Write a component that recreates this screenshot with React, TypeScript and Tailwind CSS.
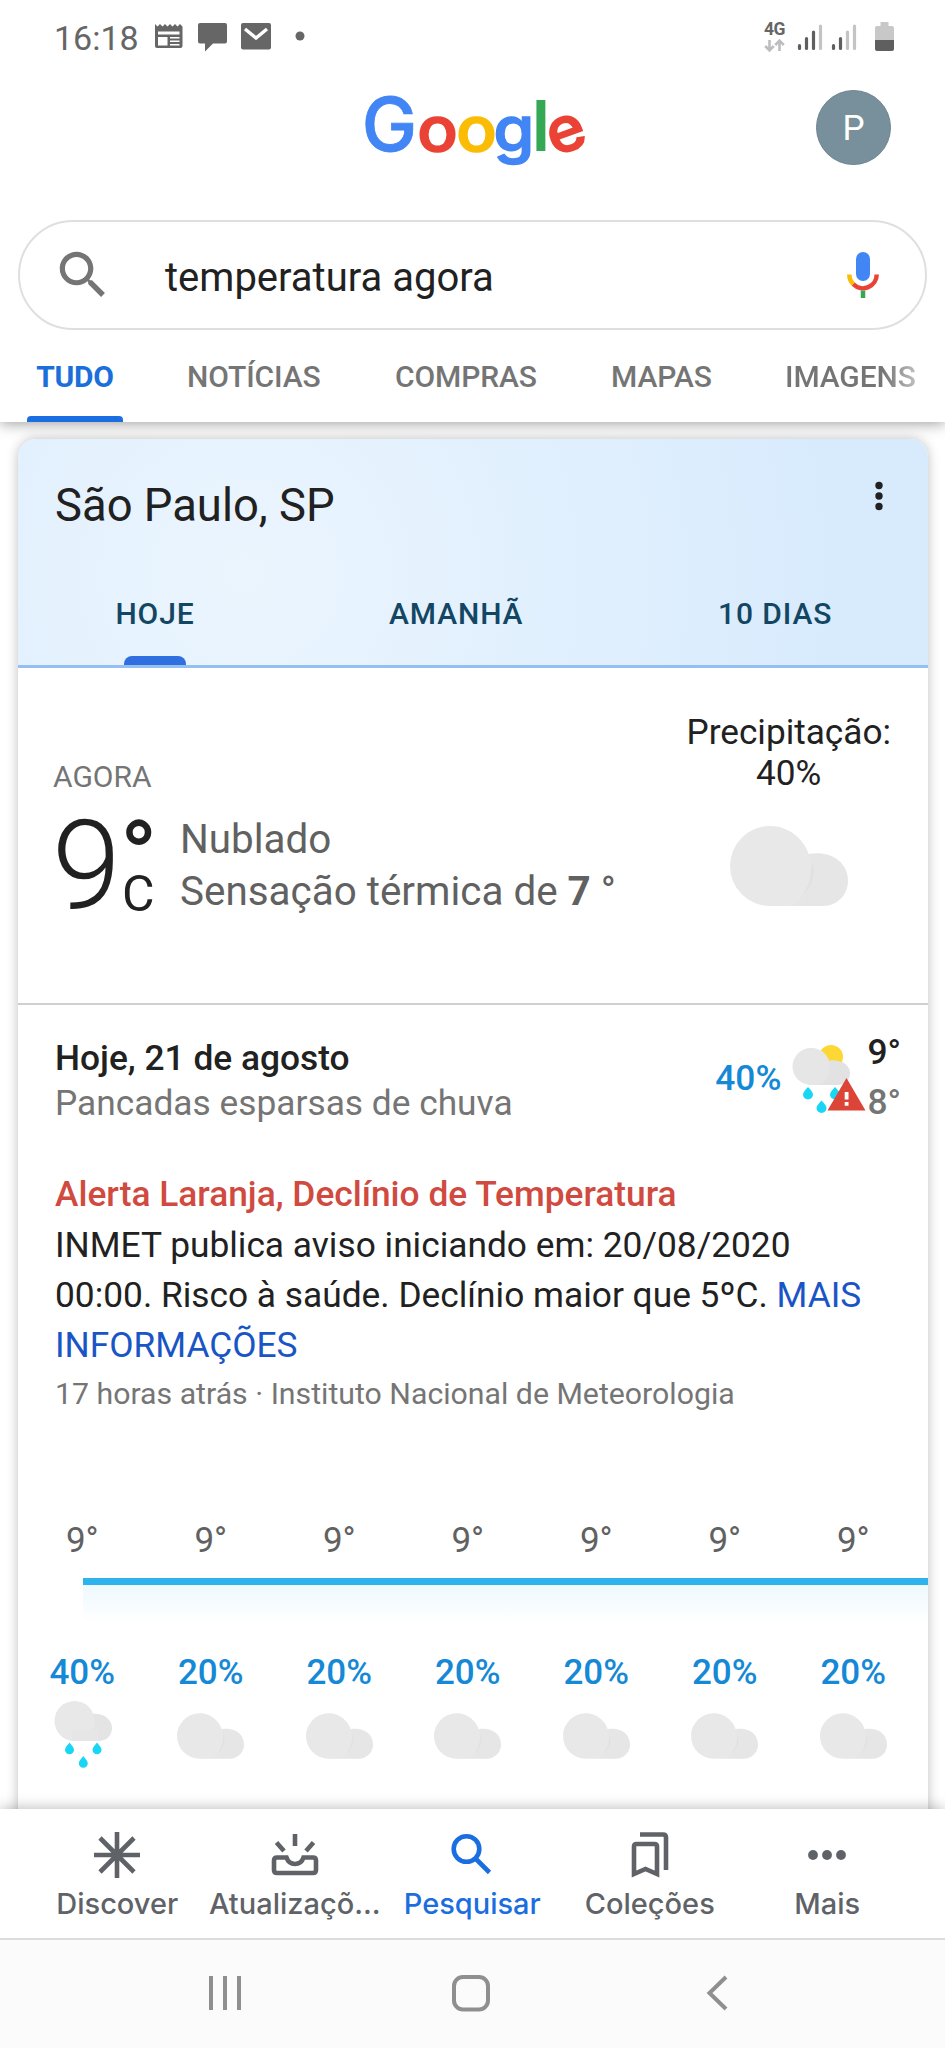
import React from "react";

const HOURS = [
  { temp: "9°", rain: "40%", kind: "rain" },
  { temp: "9°", rain: "20%", kind: "cloud" },
  { temp: "9°", rain: "20%", kind: "cloud" },
  { temp: "9°", rain: "20%", kind: "cloud" },
  { temp: "9°", rain: "20%", kind: "cloud" },
  { temp: "9°", rain: "20%", kind: "cloud" },
  { temp: "9°", rain: "20%", kind: "cloud" },
];

function StatusBar() {
  return (
    <div className="flex h-[75px] shrink-0 items-start justify-between pr-[50px] pl-[54px] text-[#666]">
      <div className="flex items-start">
        <span className="w-[98px] pt-[18px] text-[34px] leading-[40px]">16:18</span>
        <svg className="mt-[20px]" width="156" height="34" viewBox="152 20 156 34" fill="#666">
          <path d="M155 24l2.500 2.500 2.500-2.500 2.500 2.500 2.500-2.500 2.500 2.500 2.500-2.500 2.500 2.500 2.500-2.500 2.500 2.500 2.500-2.500 2.500 2.500V46a2 2 0 0 1-2 2H157a2 2 0 0 1-2-2z" />
          <path d="M158 31.500h21.500v3H158zM158 37h9.500v8.500H158zM170 37h9.500v1.500H170zM170 40.500h9.500v1.500H170zM170 44h9.500v1.500H170z" fill="#fff" />
          <path d="M200 23h25a2 2 0 0 1 2 2v16.500a2 2 0 0 1-2 2H213l-8 8v-8h-5a2 2 0 0 1-2-2V25a2 2 0 0 1 2-2z" />
          <rect x="241" y="23" width="30" height="26.500" rx="2" />
          <path d="M245 29l11 9 11-9" fill="none" stroke="#fff" strokeWidth="3.400" />
          <circle cx="300" cy="36" r="4.500" />
        </svg>
      </div>
      <div className="flex">
        <div className="flex w-[33px] flex-col pt-[19px]">
          <span className="text-[17.5px] leading-[20px] font-bold tracking-[-0.5px]">4G</span>
          <svg width="22" height="14" viewBox="0 0 22 14" fill="none" stroke="#bdbdbd" strokeWidth="2.600">
            <path d="M5.500 1v10M1.200 7l4.300 4.300L9.800 7M15.500 12V2M11.200 6l4.300-4.300L19.800 6" />
          </svg>
        </div>
        <svg className="mt-[20px]" width="98" height="34" viewBox="796 20 98 34" strokeWidth="3.200" strokeLinecap="round">
          <path d="M798.500 45.500v3M805.500 38.500v10M812.500 32v16.500M832.500 45.500v3M839.500 38.500v10" stroke="#5f5f5f" />
          <path d="M819.500 26v22.500M846.500 32v16.500M853.500 26v22.500" stroke="#c4c4c4" />
          <path d="M879.500 22h8v4h3.500a2 2 0 0 1 2 2v12h-19V28a2 2 0 0 1 2-2h3.500z" fill="#c8c8c8" />
          <path d="M874 40h19v9a2 2 0 0 1-2 2h-15a2 2 0 0 1-2-2z" fill="#5f5f5f" />
        </svg>
      </div>
    </div>
  );
}

function Logo() {
  return (
    <svg className="shrink-0" width="269" height="130" viewBox="341 70 269 130" fontFamily="Inter, sans-serif" fontWeight="500" textAnchor="middle">
      <text x="392.500" y="151" fontSize="74" fill="#4285f4" stroke="#4285f4" strokeWidth="0.8">G</text>
      <g fontSize="61" strokeWidth="1.6">
        <text transform="translate(440.500 151) scale(1.1 1.02)" fill="#ea4335" stroke="#ea4335">o</text>
        <text transform="translate(479.500 151) scale(1.1 1.02)" fill="#fbbc05" stroke="#fbbc05">o</text>
        <text transform="translate(517 151) scale(1.08 1.02)" fill="#4285f4" stroke="#4285f4">g</text>
        <text transform="rotate(-20 569.500 134.500) translate(569.500 151) scale(1.06 1.02)" fill="#ea4335" stroke="#ea4335">e</text>
      </g>
      <text x="544" y="151" fontSize="70" fontWeight="600" fill="#34a853">l</text>
    </svg>
  );
}

function SearchBar() {
  return (
    <div className="mr-[18px] ml-[18px] flex h-[110px] shrink-0 items-center rounded-full border-[2.5px] border-[#dfdfdf] pl-[32px]">
      <svg width="62" height="62" viewBox="0 0 24 24" fill="#757575">
        <path d="M15.500 14h-.79l-.28-.27C15.410 12.590 16 11.110 16 9.500 16 5.910 13.090 3 9.500 3S3 5.910 3 9.500 5.910 16 9.500 16c1.610 0 3.090-.59 4.230-1.570l.27.28v.79l5 4.990L20.490 19l-4.990-5zm-6 0C7.010 14 5 11.990 5 9.500S7.010 5 9.500 5 14 7.010 14 9.500 11.990 14 9.500 14z" />
      </svg>
      <span className="ml-[51px] flex-1 pt-[5px] text-[40px] leading-[50px] text-[#212121]">temperatura agora</span>
      <svg className="mr-[42px]" width="40" height="50" viewBox="842 250 40 50" fill="none" strokeWidth="4.500">
        <rect x="855" y="252" width="14" height="29" rx="7" fill="#4285f4" />
        <path d="M848.300 274.500a13.700 13.700 0 0 0 4 9.700" stroke="#fbbc05" />
        <path d="M852.300 284.200a13.700 13.700 0 0 0 23.400-9.700" stroke="#ea4335" />
        <path d="M862 290.500v7.500" stroke="#34a853" />
      </svg>
    </div>
  );
}

function SearchTabs() {
  return (
    <div className="flex h-[92px] shrink-0 pl-[27px] text-[30px] leading-[40px] font-medium tracking-[-0.1px] whitespace-nowrap text-[#757575]">
      <div className="flex w-[96px] flex-col items-center justify-between pt-[27px] text-[#1a6fdb]">
        <span className="font-bold tracking-[-0.3px]">TUDO</span>
        <div className="h-[6px] w-full rounded-t-[4px] bg-[#1b6ee0]" />
      </div>
      <span className="ml-[64px] w-[208px] pt-[27px]">NOTÍCIAS</span>
      <span className="w-[216px] pt-[27px]">COMPRAS</span>
      <span className="w-[174px] pt-[27px]">MAPAS</span>
      <span className="bg-gradient-to-r from-[#757575] from-75% to-[#c0c0c0] bg-clip-text pt-[27px] text-transparent">IMAGENS</span>
    </div>
  );
}

function Cloud({ className }: { className?: string }) {
  return (
    <svg className={className} viewBox="0 0 118 80">
      <path d="M78 28c20-4 40 6 40 27 0 14-11 25-25 25H60z" fill="#e6e6e6" />
      <path d="M40 0c22 0 40 18 41 40 0 16-8 40-24 40H40a40 40 0 0 1 0-80z" fill="#e8e8e8" />
      <path d="M81 37c2 12-3 25-9 32 8-3 16-24 9-32z" fill="#e1e1e1" />
    </svg>
  );
}

function RainCloud() {
  return (
    <svg className="h-[72px] w-[60px]" viewBox="52 1698 60 72">
      <path d="M88 1715c12-4 24 3 24 13 0 8-6 13-13 13H80z" fill="#e4e4e4" />
      <circle cx="74.500" cy="1721" r="20" fill="#e8e8e8" />
      <rect x="72" y="1730" width="26" height="11" fill="#e6e6e6" />
      <g fill="#1ad6f5">
        <path d="M69.500 1742.500c2.500 3.500 4.500 5 4.500 7.300a4.500 4.500 0 0 1-9 0c0-2.300 2-3.800 4.500-7.300z" />
        <path d="M97 1742.500c2.500 3.500 4.500 5 4.500 7.300a4.500 4.500 0 0 1-9 0c0-2.300 2-3.800 4.500-7.300z" />
        <path d="M83.300 1756c2.500 3.500 4.500 5 4.500 7.300a4.500 4.500 0 0 1-9 0c0-2.300 2-3.800 4.500-7.300z" />
      </g>
    </svg>
  );
}

function AlertWeather() {
  return (
    <svg width="78" height="72" viewBox="790 1042 78 72">
      <circle cx="831" cy="1056" r="12" fill="#fdd835" />
      <path d="M826 1060c13-3 24 3 24 12 0 7-5 12-12 12h-26z" fill="#e2e2e2" />
      <path d="M811 1047c11 0 19 8 19 19 0 8-5 18-13 18h-6a18.500 18.500 0 0 1 0-37z" fill="#e6e6e6" />
      <g fill="#1ad6f5">
        <path d="M808 1086c3 3.500 5 5.500 5 7.500a5 5 0 0 1-10 0c0-2 2-4 5-7.500z" />
        <path d="M835 1086c3 3.500 5 5.500 5 7.500a5 5 0 0 1-10 0c0-2 2-4 5-7.500z" />
        <path d="M821.500 1099.500c3 3.500 5 5.500 5 7.500a5 5 0 0 1-10 0c0-2 2-4 5-7.500z" />
      </g>
      <path d="M846.500 1077l19 32.500h-38z" fill="#dc4437" />
      <path d="M844.700 1091h3.800v7.500h-3.800zM844.700 1101h3.800v3.800h-3.800z" fill="#fff" />
    </svg>
  );
}

function WeatherHeader() {
  return (
    <div className="flex h-[229px] flex-col rounded-t-[18px] border-b-[3px] border-[#93bff2] bg-[radial-gradient(circle_at_25%_60%,#ebf5fe_0%,#e3f1fe_35%,#d8ebfd_85%)]">
      <div className="flex items-start justify-between pt-[37px] pr-[43px] pl-[37px]">
        <span className="text-[45.4px] leading-[60px] text-[#212121]">São Paulo, SP</span>
        <svg className="mt-[4px]" width="12" height="32" viewBox="0 0 12 32" fill="#212121">
          <circle cx="6" cy="5.500" r="3.700" />
          <circle cx="6" cy="16" r="3.700" />
          <circle cx="6" cy="26.500" r="3.700" />
        </svg>
      </div>
      <div className="mt-[58px] flex flex-1 pl-[98px] text-[30px] leading-[40px] font-medium tracking-[0.9px] text-[#134663]">
        <div className="flex w-[78px] flex-col items-center justify-between">
          <span>HOJE</span>
          <div className="h-[9px] w-[62px] rounded-t-[8px] bg-[#2f6fdf]" />
        </div>
        <span className="ml-[195px] w-[329px]">AMANHÃ</span>
        <span>10 DIAS</span>
      </div>
    </div>
  );
}

function CurrentWeather() {
  return (
    <div className="flex h-[337px] justify-between border-b-2 border-[#cfcfcf] pr-[37px] pl-[34px]">
      <div className="flex flex-col pt-[89px]">
        <span className="pl-[1px] text-[30px] leading-[40px] text-[#757575]">AGORA</span>
        <div className="mt-[7px] flex">
          <span className="w-[70px] text-[124px] leading-[124px] font-light text-[#212121]">9</span>
          <div className="flex w-[58px] flex-col pt-[29px] text-[#212121]">
            <span className="-ml-[2px] text-[98px] leading-[48px] font-medium">°</span>
            <span className="-mt-[7px] text-[50px] leading-[40px]">C</span>
          </div>
          <div className="flex flex-col pt-[10px] text-[40.4px] leading-[52px] whitespace-nowrap text-[#616161]">
            <span>Nublado</span>
            <span>
              Sensação térmica de <b className="font-bold">7</b> °
            </span>
          </div>
        </div>
      </div>
      <div className="flex flex-col items-center pt-[44px] text-[35.2px] leading-[41px] text-[#212121]">
        <span>Precipitação:</span>
        <span>40%</span>
        <Cloud className="mt-[32px] h-[80px] w-[118px]" />
      </div>
    </div>
  );
}

function TodayForecast() {
  return (
    <div className="flex flex-col pl-[37px] text-[35.3px] text-[#212121]">
      <div className="flex justify-between pt-[31px] pr-[27px]">
        <div className="flex flex-col leading-[45px]">
          <span className="font-medium">Hoje, 21 de agosto</span>
          <span className="text-[#757575]">Pancadas esparsas de chuva</span>
        </div>
        <div className="flex items-start">
          <span className="mt-[20px] mr-[9px] leading-[45px] font-medium text-[#1589d6]">40%</span>
          <div className="mt-[7px] -mr-[1px]">
            <AlertWeather />
          </div>
          <div className="-mt-[9px] flex flex-col leading-[50px] font-medium">
            <span>9°</span>
            <span className="text-[#757575]">8°</span>
          </div>
        </div>
      </div>
      <span className="mt-[42px] leading-[50px] font-medium text-[#d04a3f]">Alerta Laranja, Declínio de Temperatura</span>
      <p className="mt-[1px] leading-[50px] whitespace-nowrap">
        INMET publica aviso iniciando em: 20/08/2020
        <br />
        00:00. Risco à saúde. Declínio maior que 5ºC. <span className="text-[#1a55c6]">MAIS</span>
        <br />
        <span className="text-[#1a55c6]">INFORMAÇÕES</span>
      </p>
      <span className="mt-[4px] text-[30.25px] leading-[40px] text-[#757575]">17 horas atrás · Instituto Nacional de Meteorologia</span>
    </div>
  );
}

function HourlyForecast() {
  return (
    <div className="mt-[104px] flex flex-col text-center text-[35px] leading-[45px]">
      <div className="flex">
        {HOURS.map((h, i) => (
          <span key={i} className="w-[128.5px] text-[#616161]">{h.temp}</span>
        ))}
      </div>
      <div className="mt-[15px] ml-[65px] h-[7px] bg-[#2fb3ec]" />
      <div className="ml-[65px] h-[38px] bg-gradient-to-b from-[#eef9fe] to-white" />
      <div className="mt-[27px] flex">
        {HOURS.map((h, i) => (
          <div key={i} className="flex w-[128.5px] flex-col items-center">
            <span className="font-medium text-[#1589d6]">{h.rain}</span>
            <div className="mt-[3px] flex">
              {h.kind === "rain" ? <RainCloud /> : <Cloud className="mt-[15px] h-[46px] w-[67px]" />}
            </div>
          </div>
        ))}
      </div>
    </div>
  );
}

function NavItem({ label, active, children }: { label: string; active?: boolean; children: React.ReactNode }) {
  return (
    <div className={active ? "flex w-[177.5px] flex-col items-center text-[#1b6ee0]" : "flex w-[177.5px] flex-col items-center text-[#5f6368]"}>
      <svg className="mt-[18px]" width="56" height="56" viewBox="-28 -28 56 56" fill="none" stroke="currentColor" strokeWidth="4.600">
        {children}
      </svg>
      <span className="mt-[1px] text-[29px] leading-[40px] font-medium whitespace-nowrap">{label}</span>
    </div>
  );
}

function BottomNav() {
  return (
    <div className="relative z-10 flex h-[129px] shrink-0 bg-white pl-[28.5px] font-[Inter,sans-serif] shadow-[0_0_14px_rgba(0,0,0,0.3)]">
      <NavItem label="Discover">
        <path d="M0-23v46M-23 0h46M-17-17l34 34M17-17l-34 34" />
      </NavItem>
      <NavItem label="Atualizaçõ...">
        <path d="M0-21v12M-18.500-12.500l7.500 8.500M18.500-12.500l-7.500 8.500" />
        <path d="M-18 2.500h9.500C-7 7-4 9 0 9S7 7 8.500 2.500H18q3 0 3 3v9.500q0 3-3 3h-36q-3 0-3-3V5.500q0-3 3-3z" />
      </NavItem>
      <NavItem label="Pesquisar" active>
        <circle cx="-5.500" cy="-6" r="12.800" />
        <path d="M3.500 3.500L17.500 17.500" />
      </NavItem>
      <NavItem label="Coleções">
        <path d="M-16-8.500q0-2.500 2.500-2.500h18q2.500 0 2.500 2.500V19l-11.500-5-11.500 5z" />
        <path d="M-10-20.500h23q3 0 3 3V15" />
      </NavItem>
      <NavItem label="Mais">
        <g fill="currentColor" stroke="none">
          <circle cx="-14" cy="0" r="4.900" />
          <circle cx="0" cy="0" r="4.900" />
          <circle cx="14" cy="0" r="4.900" />
        </g>
      </NavItem>
    </div>
  );
}

function SystemBar() {
  return (
    <div className="relative z-10 flex h-[110px] shrink-0 items-start justify-center border-t-[2px] border-[#dcdcdc] bg-[#fbfbfb] pt-[28px] pr-[5px]">
      <svg width="540" height="50" viewBox="200 1968 540 50" fill="none" stroke="#8f8f8f" strokeWidth="4">
        <path d="M211 1976v34M225 1976v34M239 1976v34" />
        <rect x="454" y="1977" width="34" height="32.500" rx="9" />
        <path d="M726 1977l-16.500 16 16.500 16" />
      </svg>
    </div>
  );
}

export default function App() {
  return (
    <div className="flex h-[2048px] w-[945px] flex-col overflow-hidden bg-white font-[Roboto,sans-serif]">
      <header className="relative z-10 flex h-[422px] shrink-0 flex-col bg-white shadow-[0_1px_14px_rgba(0,0,0,0.42)]">
        <StatusBar />
        <div className="grid h-[145px] shrink-0 grid-cols-3">
          <div />
          <div className="-mt-[5px] flex justify-center">
            <Logo />
          </div>
          <div className="flex justify-end pt-[15px] pr-[54px]">
            <div className="flex h-[75px] w-[75px] items-center justify-center rounded-full border border-[#6d8490] bg-[#78909c] pt-[3px] text-[35px] text-white">P</div>
          </div>
        </div>
        <SearchBar />
        <SearchTabs />
      </header>
      <div className="flex h-[1387px] shrink-0 flex-col overflow-hidden pt-[17px] pr-[17px] pl-[18px]">
        <div className="flex h-[1400px] shrink-0 flex-col rounded-t-[18px] bg-white shadow-[0_0_12px_rgba(0,0,0,0.26)]">
          <WeatherHeader />
          <CurrentWeather />
          <TodayForecast />
          <HourlyForecast />
        </div>
      </div>
      <BottomNav />
      <SystemBar />
    </div>
  );
}
